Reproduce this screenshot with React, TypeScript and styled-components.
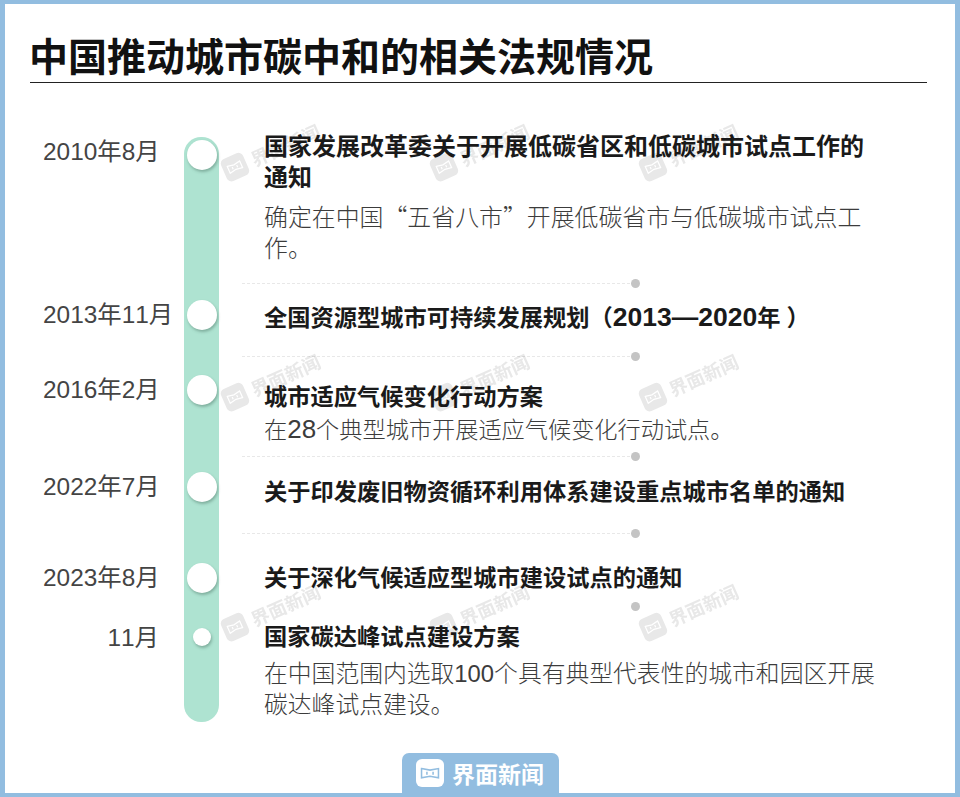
import React from 'react';
import styled, { createGlobalStyle } from 'styled-components';

const frameBlue = '#92bde0';
const railGreen = '#aee3d1';

const GlobalStyle = createGlobalStyle`
  html, body {
    margin: 0;
    padding: 0;
    background: #ffffff;
  }
`;

const Frame = styled.div`
  width: 960px;
  height: 797px;
  box-sizing: border-box;
  position: relative;
  display: flex;
  flex-direction: column;
  background: #ffffff;
  border: solid ${frameBlue};
  border-width: 4px 5px 4px 5px;
  font-family: 'Liberation Sans', 'Noto Sans CJK SC', sans-serif;
  overflow: hidden;
`;

const Header = styled.header`
  margin: 0 28px 0 25px;
  height: 79px;
  padding-top: 27px;
  box-sizing: border-box;
  border-bottom: 1px solid #222;
`;

const Title = styled.h1`
  margin: 0 0 0 -1px;
  font-family: 'Noto Sans CJK SC', sans-serif;
  font-size: 39px;
  line-height: 46px;
  font-weight: 700;
  color: #111;
`;

const Timeline = styled.div`
  margin-top: 48px;
  display: flex;
  flex-direction: column;
`;

const Row = styled.section<{ $h: number }>`
  height: ${(p) => p.$h}px;
  display: grid;
  grid-template-columns: 179px 35px 1fr;
`;

const DateCell = styled.div<{ $top: number; $right?: boolean }>`
  padding-top: ${(p) => p.$top}px;
  padding-left: 38px;
  padding-right: ${(p) => (p.$right ? 25 : 0)}px;
  text-align: ${(p) => (p.$right ? 'right' : 'left')};
  font-size: 24.4px;
  font-kerning: none;
  line-height: 32px;
  font-weight: 400;
  color: #444;
  white-space: nowrap;
`;

const RailCell = styled.div<{ $top: number; $first?: boolean; $last?: boolean }>`
  margin-top: ${(p) => (p.$first ? 6 : 0)}px;
  padding-top: ${(p) => p.$top}px;
  display: flex;
  justify-content: center;
  align-items: flex-start;
  background: ${railGreen};
  border-radius: ${(p) => (p.$first ? '17px 17px 0 0' : p.$last ? '0 0 17px 17px' : '0')};
`;

const Dot = styled.span<{ $small?: boolean }>`
  width: ${(p) => (p.$small ? 18 : 30)}px;
  height: ${(p) => (p.$small ? 18 : 30)}px;
  border-radius: 50%;
  background: #ffffff;
  box-shadow: 1px 2px 3px rgba(70, 110, 95, 0.45);
`;

const Content = styled.div`
  position: relative;
  padding-left: 45px;
  width: 612px;
`;

const TextBlock = styled.div<{ $top: number }>`
  margin-top: ${(p) => p.$top}px;
`;

const Heading = styled.h2<{ $size: number }>`
  margin: 0;
  font-family: 'Liberation Sans', 'Noto Sans CJK SC', sans-serif;
  font-size: ${(p) => p.$size}px;
  line-height: 31px;
  font-weight: 700;
  color: #1a1a1a;
`;

const Body = styled.p<{ $gap: number; $size: number; $cjk?: boolean }>`
  margin: ${(p) => p.$gap}px 0 0;
  font-family: ${(p) => (p.$cjk ? "'Noto Sans CJK SC'" : "'Liberation Sans', 'Noto Sans CJK SC'")}, sans-serif;
  font-size: ${(p) => p.$size}px;
  line-height: 31px;
  font-weight: 300;
  color: #3c3c3c;
`;

// latin digits sit a little larger than the han text around them
const Num = styled.span`
  font-size: 26px;
`;

const YearRange = styled.span`
  font-size: 26.5px;
`;

const CloseParen = styled.span`
  padding-left: 6px;
`;

const Separator = styled.div<{ $noLine?: boolean }>`
  position: absolute;
  left: 23px;
  bottom: 0;
  width: 393px;
  border-bottom: 1px dashed ${(p) => (p.$noLine ? 'transparent' : '#e8e8e8')};

  &::after {
    content: '';
    position: absolute;
    right: -5px;
    top: -4px;
    width: 9px;
    height: 9px;
    border-radius: 50%;
    background: #c4c4c4;
  }
`;

const Watermarks = styled.div`
  position: absolute;
  left: 219px;
  top: 153px;
  display: grid;
  grid-template-columns: repeat(3, 209px);
  grid-template-rows: repeat(3, 230px);
  pointer-events: none;
  mix-blend-mode: multiply;
`;

const Mark = styled.div`
  display: flex;
  align-items: center;
  gap: 6px;
  height: 30px;
  transform: rotate(-24deg);
  transform-origin: left center;
  color: #e8e8e8;
  font-family: 'Noto Sans CJK SC', sans-serif;
  font-size: 18.5px;
  font-weight: 700;
  white-space: nowrap;
`;

const MarkBadge = styled.span`
  width: 24px;
  height: 24px;
  border-radius: 5px;
  background: #e8e8e8;
  display: flex;
  align-items: center;
  justify-content: center;
  flex: none;
`;

const FooterTab = styled.footer`
  margin: auto auto 0;
  width: 157px;
  height: 40px;
  display: flex;
  align-items: center;
  justify-content: center;
  gap: 8px;
  box-sizing: border-box;
  background: ${frameBlue};
  border-radius: 7px 7px 0 0;
`;

const LogoBadge = styled.span`
  width: 28px;
  height: 28px;
  border-radius: 6px;
  background: #ffffff;
  display: flex;
  align-items: center;
  justify-content: center;
  flex: none;
`;

const Brand = styled.span`
  font-family: 'Noto Sans CJK SC', sans-serif;
  font-size: 23px;
  line-height: 30px;
  font-weight: 700;
  color: #ffffff;
`;

// bow-tie frame used by the brand mark
const BrandGlyph = ({ size, color }: { size: number; color: string }) => (
  <svg width={size} height={size * 0.62} viewBox="0 0 26 16" fill="none" stroke={color} strokeWidth="2">
    <path d="M2 2 L13 4 L24 2 V14 L13 12 L2 14 Z" />
    <path d="M9 6 V10 M17 6 V10" />
  </svg>
);

type Entry = {
  h: number;
  date: string;
  dateTop: number;
  dotTop: number;
  textTop: number;
  title: React.ReactNode;
  titleSize?: number;
  body?: React.ReactNode;
  bodyGap?: number;
  bodySize?: number;
  bodyCjk?: boolean;
  right?: boolean;
  small?: boolean;
  noLine?: boolean;
};

const entries: Entry[] = [
  {
    h: 153,
    date: '2010年8月',
    dateTop: 5,
    dotTop: 3,
    textTop: 0,
    title: '国家发展改革委关于开展低碳省区和低碳城市试点工作的通知',
    titleSize: 24,
    body: '确定在中国“五省八市”开展低碳省市与低碳城市试点工作。',
    bodyGap: 7,
    bodySize: 23.9,
    bodyCjk: true,
  },
  {
    h: 73,
    date: '2013年11月',
    dateTop: 15,
    dotTop: 16,
    textTop: 18,
    title: (
      <>
        全国资源型城市可持续发展规划（<YearRange>2013—2020</YearRange>年<CloseParen>）</CloseParen>
      </>
    ),
  },
  {
    h: 100,
    date: '2016年2月',
    dateTop: 17,
    dotTop: 18,
    textTop: 25,
    title: '城市适应气候变化行动方案',
    body: (
      <>
        在<Num>28</Num>个典型城市开展适应气候变化行动试点。
      </>
    ),
    bodyGap: 1,
    bodySize: 23.2,
  },
  { h: 77, date: '2022年7月', dateTop: 14, dotTop: 15, textTop: 20, title: '关于印发废旧物资循环利用体系建设重点城市名单的通知' },
  { h: 73, date: '2023年8月', dateTop: 28, dotTop: 29, textTop: 29, title: '关于深化气候适应型城市建设试点的通知', noLine: true },
  {
    h: 115,
    date: '11月',
    dateTop: 15,
    dotTop: 21,
    textTop: 15,
    title: '国家碳达峰试点建设方案',
    body: '在中国范围内选取100个具有典型代表性的城市和园区开展碳达峰试点建设。',
    bodyGap: 5,
    bodySize: 23.8,
    right: true,
    small: true,
  },
];

export default function App() {
  return (
    <Frame>
      <GlobalStyle />
      <Header>
        <Title>中国推动城市碳中和的相关法规情况</Title>
      </Header>
      <Timeline>
        {entries.map((e, i) => (
          <Row key={e.date} $h={e.h}>
            <DateCell $top={e.dateTop} $right={e.right}>
              {e.date}
            </DateCell>
            <RailCell $top={e.dotTop} $first={i === 0} $last={i === entries.length - 1}>
              <Dot $small={e.small} />
            </RailCell>
            <Content>
              <TextBlock $top={e.textTop}>
                <Heading $size={e.titleSize ?? 23.25}>{e.title}</Heading>
                {e.body && (
                  <Body $gap={e.bodyGap ?? 0} $size={e.bodySize ?? 23.6} $cjk={e.bodyCjk}>
                    {e.body}
                  </Body>
                )}
              </TextBlock>
              {i < entries.length - 1 && <Separator $noLine={e.noLine} />}
            </Content>
          </Row>
        ))}
      </Timeline>
      <Watermarks>
        {Array.from({ length: 9 }).map((_, i) => (
          <Mark key={i}>
            <MarkBadge>
              <BrandGlyph size={16} color="#ffffff" />
            </MarkBadge>
            界面新闻
          </Mark>
        ))}
      </Watermarks>
      <FooterTab>
        <LogoBadge>
          <BrandGlyph size={20} color="#92bde0" />
        </LogoBadge>
        <Brand>界面新闻</Brand>
      </FooterTab>
    </Frame>
  );
}
